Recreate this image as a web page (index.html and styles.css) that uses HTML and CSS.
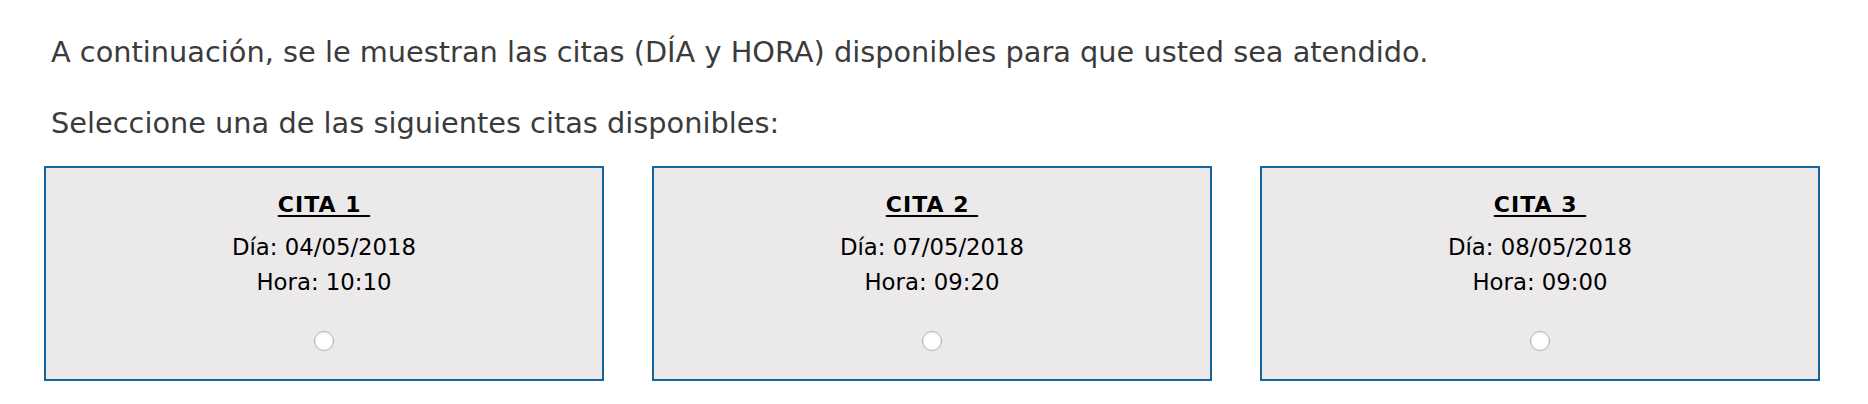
FILE: index.html
```html
<!DOCTYPE html>
<html lang="es">
<head>
<meta charset="utf-8">
<title>Citas disponibles</title>
<link rel="stylesheet" href="styles.css">
</head>
<body>
<div class="page">
  <p class="intro intro-first">A continuación, se le muestran las citas (DÍA y HORA) disponibles para que usted sea atendido.</p>
  <p class="intro intro-second">Seleccione una de las siguientes citas disponibles:</p>
  <div class="citas">
    <label class="cita">
      <span class="cita-title">CITA 1&nbsp;</span>
      <span class="cita-line">Día: 04/05/2018</span>
      <span class="cita-line">Hora: 10:10</span>
      <input class="cita-radio" type="radio" name="cita" value="1">
    </label>
    <label class="cita">
      <span class="cita-title">CITA 2&nbsp;</span>
      <span class="cita-line">Día: 07/05/2018</span>
      <span class="cita-line">Hora: 09:20</span>
      <input class="cita-radio" type="radio" name="cita" value="2">
    </label>
    <label class="cita">
      <span class="cita-title">CITA 3&nbsp;</span>
      <span class="cita-line">Día: 08/05/2018</span>
      <span class="cita-line">Hora: 09:00</span>
      <input class="cita-radio" type="radio" name="cita" value="3">
    </label>
  </div>
</div>
</body>
</html>
```
FILE: styles.css
```css
html, body {
  margin: 0;
  padding: 0;
  background: #ffffff;
}

.page {
  padding: 34px 48px 0 44px;
  font-family: "DejaVu Sans", "Liberation Sans", sans-serif;
}

.intro {
  margin: 0;
  padding-left: 7px;
  font-size: 28.8px;
  line-height: 36px;
  color: #3b3b3b;
}

.intro-second {
  margin-top: 35px;
}

.citas {
  margin-top: 25px;
  display: grid;
  grid-template-columns: repeat(3, 560px);
  column-gap: 48px;
}

.cita {
  box-sizing: border-box;
  height: 215px;
  border: 2px solid #13679d;
  background: #ebe9ea;
  display: flex;
  flex-direction: column;
  align-items: center;
  padding-top: 25px;
  color: #000;
}

.cita-title {
  font-weight: bold;
  font-size: 22px;
  line-height: 24px;
  letter-spacing: 1px;
  text-decoration: underline;
  text-decoration-thickness: 2px;
  text-underline-offset: 3px;
  margin-bottom: 13px;
}

.cita-line {
  font-size: 22.8px;
  line-height: 35px;
}

.cita-radio {
  -webkit-appearance: none;
  appearance: none;
  box-sizing: border-box;
  width: 20px;
  height: 20px;
  margin: 31px 0 0 0;
  border-radius: 50%;
  border: 1px solid #b3b3b3;
  background: radial-gradient(circle at 50% 40%, #ffffff 55%, #f1f1f1 100%);
  box-shadow: inset 0 1px 1px rgba(0, 0, 0, 0.06);
}
```
